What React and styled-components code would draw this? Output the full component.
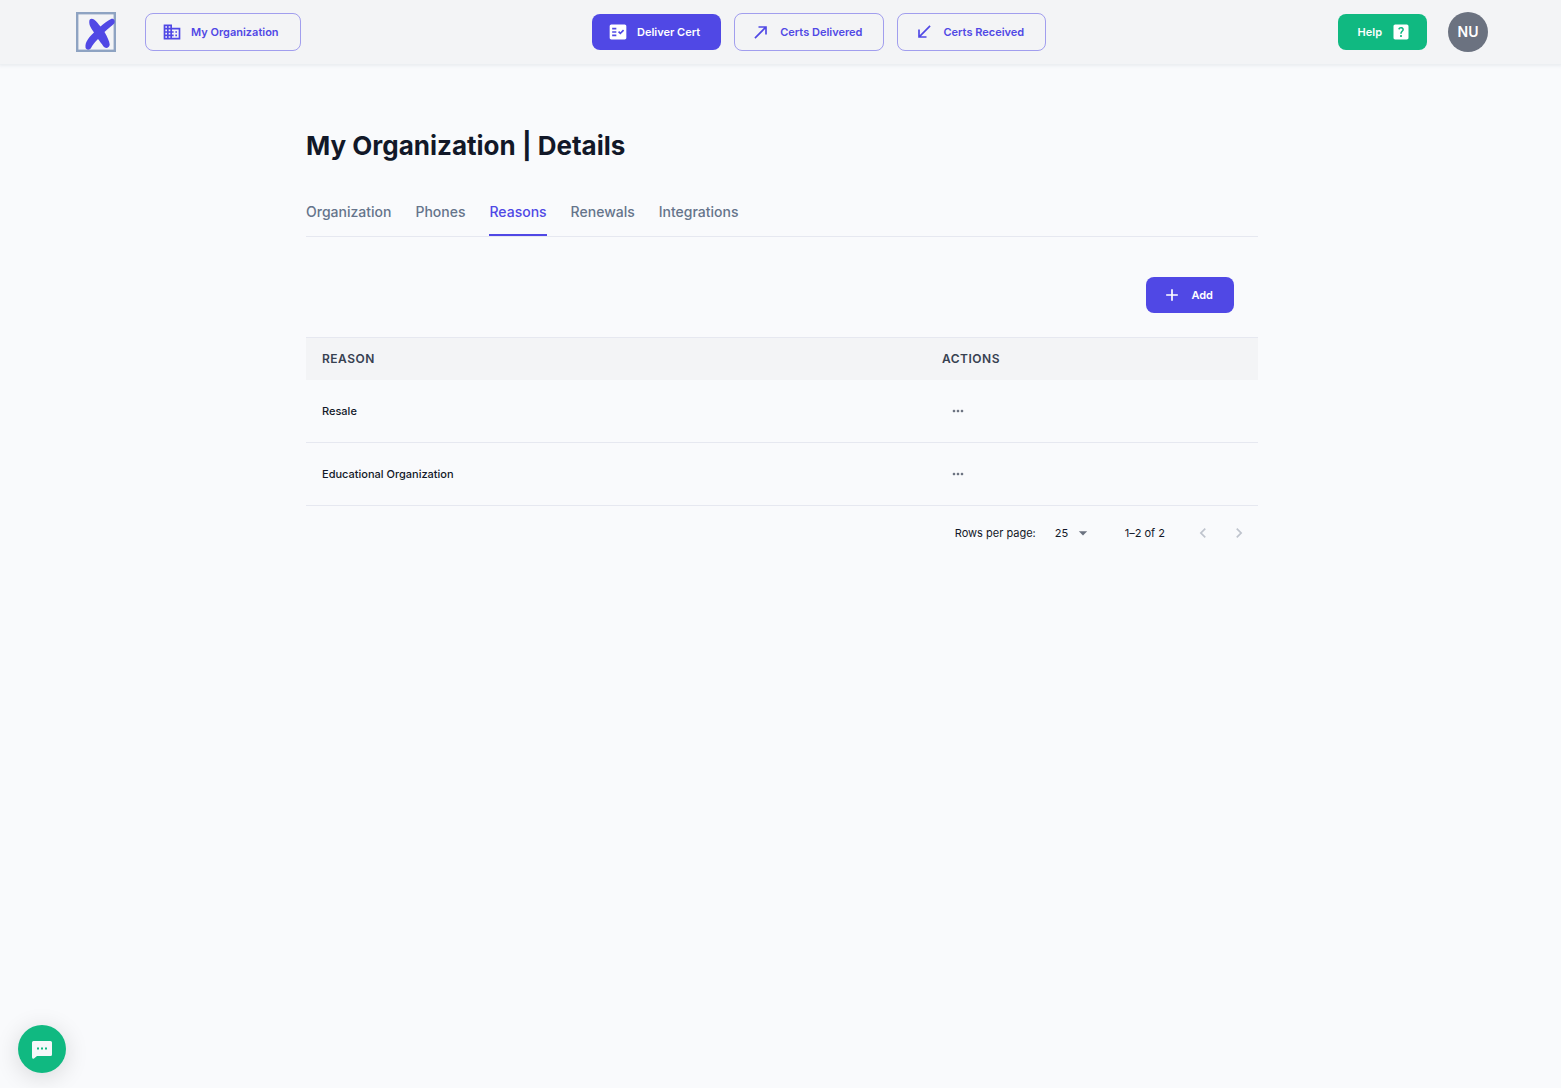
import React from "react";
import styled, { createGlobalStyle, css } from "styled-components";
import {
  MdOutlineBusiness,
  MdFactCheck,
  MdCallMade,
  MdCallReceived,
  MdHelpCenter,
  MdAdd,
  MdMoreHoriz,
  MdArrowDropDown,
  MdKeyboardArrowLeft,
  MdKeyboardArrowRight,
} from "react-icons/md";

const color = {
  primary: "#5048e5",
  success: "#10b981",
  page: "#f9fafc",
  surface: "#f3f4f6",
  divider: "#e6e8f0",
  text: "#121828",
  muted: "#65748b",
  heading: "#374151",
  grey: "#6b7280",
};

const GlobalStyle = createGlobalStyle`
  *, *::before, *::after { box-sizing: border-box; }
  body {
    margin: 0;
    background: ${color.page};
    color: ${color.text};
    font-family: Inter, "Liberation Sans", sans-serif;
    font-size: 11px;
    line-height: 20px;
  }
  button, select { font: inherit; cursor: pointer; }
`;

const Header = styled.header`
  display: flex;
  align-items: center;
  justify-content: space-between;
  height: 64px;
  padding: 0 73px 0 76px;
  background: ${color.surface};
  box-shadow: 0 1px 3px 1px rgba(100, 116, 139, 0.1);
`;

const Group = styled.div`
  display: flex;
  align-items: center;
  gap: ${(p) => p.$gap}px;
`;

const LogoLink = styled.a`
  display: block;
  width: 40px;
  height: 40px;
`;

const variants = {
  filled: css`
    border: 0;
    color: #fff;
    background: ${color.primary};
  `,
  success: css`
    border: 0;
    color: #fff;
    background: ${color.success};
  `,
  outlined: css`
    border: 1px solid rgba(80, 72, 229, 0.5);
    color: ${color.primary};
    background: transparent;
  `,
};

const Button = styled.button`
  display: inline-flex;
  align-items: center;
  gap: 9px;
  padding: ${(p) => (p.$iconEnd ? "8px 16px 8px 20px" : "8px 21px 8px 16px")};
  border-radius: 8px;
  font-weight: 600;
  line-height: 20px;
  ${(p) => variants[p.$variant]}

  svg {
    width: 20px;
    height: 20px;
  }
`;

const Avatar = styled.button`
  width: 40px;
  height: 40px;
  padding: 0;
  border: 0;
  border-radius: 50%;
  background: ${color.grey};
  color: #fff;
  font-size: 14px;
  font-weight: 600;
`;

const Main = styled.main`
  max-width: 997px;
  margin: 0 auto;
  padding: 64px 21px 64px 24px;
`;

const Title = styled.h1`
  margin: 0;
  font-size: 26px;
  font-weight: 700;
  line-height: 36px;
`;

const Tabs = styled.nav`
  display: flex;
  gap: 24px;
  margin-top: 24px;
  border-bottom: 1px solid ${color.divider};
`;

const Tab = styled.a`
  padding: 12px 0 10px;
  border-bottom: 2px solid ${(p) => (p.$active ? color.primary : "transparent")};
  color: ${(p) => (p.$active ? color.primary : color.muted)};
  font-size: 14px;
  font-weight: 500;
  line-height: 24px;
  text-decoration: none;
`;

const Toolbar = styled.div`
  display: flex;
  justify-content: flex-end;
  padding: 40px 24px 24px;
`;

const Table = styled.table`
  width: 100%;
  border-collapse: separate;
  border-spacing: 0;
  table-layout: fixed;
`;

const HeadCell = styled.th`
  width: ${(p) => p.$width};
  height: 43px;
  padding: 0 16px;
  border-top: 1px solid ${color.divider};
  background: ${color.surface};
  color: ${color.heading};
  font-size: 12px;
  font-weight: 600;
  letter-spacing: 0.5px;
  text-align: left;
  text-transform: uppercase;
`;

const Cell = styled.td`
  height: 63px;
  padding: 0 16px;
  border-bottom: 1px solid ${color.divider};
  font-weight: 500;
`;

const IconButton = styled.button`
  display: flex;
  align-items: center;
  justify-content: center;
  padding: 8px;
  border: 0;
  border-radius: 50%;
  background: transparent;
  color: ${color.grey};

  &:disabled { color: #bfc4cd; }
  svg {
    width: ${(p) => p.$size}px;
    height: ${(p) => p.$size}px;
  }
`;

const Pagination = styled.div`
  display: flex;
  align-items: center;
  justify-content: flex-end;
  height: 53px;
  padding-right: 1px;
`;

const SelectWrap = styled.div`
  display: flex;
  align-items: center;
  margin: 0 32px 0 19px;

  svg {
    width: 20px;
    height: 20px;
    margin-left: -20px;
    color: ${color.grey};
    pointer-events: none;
  }
`;

const Select = styled.select`
  width: 38px;
  padding: 0;
  border: 0;
  appearance: none;
  background: transparent;
  color: ${color.text};
`;

const Pager = styled.div`
  display: flex;
  margin-left: 20px;
`;

const ChatButton = styled.button`
  position: fixed;
  left: 18px;
  bottom: 15px;
  display: flex;
  align-items: center;
  justify-content: center;
  width: 48px;
  height: 48px;
  padding: 0;
  border: 0;
  border-radius: 50%;
  background: ${color.success};
  box-shadow: 0 4px 24px rgba(0, 0, 0, 0.14);
`;

function Logo() {
  return (
    <svg width="40" height="40" viewBox="0 0 40 40" fill="none" aria-hidden="true">
      <rect x="1.200" y="1.200" width="37.600" height="37.600" stroke="#8ea3c2" strokeWidth="2.400" />
      <g fill={color.primary}>
        <path d="M13.300 9C13.500 6.500 16 6 18 7.500C20.500 9.500 22.500 12 24.500 14.500C28 11.500 31.500 8.500 35 7C37.500 6.200 39.500 8.500 38.500 11C37.500 13 33 15.500 28.500 20C31 24.500 33.500 29 33.700 32.500C33.500 36 29.500 37 27.500 34.500C25.500 31.500 23.500 29 22 27C19 30 16.500 33 15 36C13.500 38.500 10 38 9.500 35.500C9 29.500 13 25.500 18 20.500C16 17 12.800 14 13.300 9Z" />
      </g>
    </svg>
  );
}

function ChatIcon() {
  return (
    <svg width="22" height="22" viewBox="0 0 22 22" aria-hidden="true">
      <path
        d="M2.500 3H19.500Q21 3 21 4.500V16.500Q21 18 19.500 18H6L3 20.500Q1 21.500 1 19V4.500Q1 3 2.500 3Z"
        fill="#f6f7f9"
      />
      <path d="M6 9.500h2v2H6zM10 9.500h2v2h-2zM14 9.500h2v2h-2z" fill={color.success} />
    </svg>
  );
}

const tabs = ["Organization", "Phones", "Reasons", "Renewals", "Integrations"];
const reasons = ["Resale", "Educational Organization"];

export default function App() {
  return (
    <>
      <GlobalStyle />
      <Header>
        <Group $gap={29}>
          <LogoLink href="#home" aria-label="Home">
            <Logo />
          </LogoLink>
          <Button $variant="outlined">
            <MdOutlineBusiness />
            My Organization
          </Button>
        </Group>
        <Group $gap={13}>
          <Button $variant="filled">
            <MdFactCheck />
            Deliver Cert
          </Button>
          <Button $variant="outlined">
            <MdCallMade />
            Certs Delivered
          </Button>
          <Button $variant="outlined">
            <MdCallReceived />
            Certs Received
          </Button>
        </Group>
        <Group $gap={21}>
          <Button $variant="success" $iconEnd>
            Help
            <MdHelpCenter />
          </Button>
          <Avatar aria-label="Account">NU</Avatar>
        </Group>
      </Header>

      <Main>
        <Title>My Organization | Details</Title>
        <Tabs aria-label="Organization sections">
          {tabs.map((name) => (
            <Tab
              key={name}
              href={`#${name.toLowerCase()}`}
              $active={name === "Reasons"}
              aria-current={name === "Reasons" ? "page" : undefined}
            >
              {name}
            </Tab>
          ))}
        </Tabs>

        <Toolbar>
          <Button $variant="filled">
            <MdAdd />
            Add
          </Button>
        </Toolbar>

        <Table>
          <thead>
            <tr>
              <HeadCell $width="auto">Reason</HeadCell>
              <HeadCell $width="332px">Actions</HeadCell>
            </tr>
          </thead>
          <tbody>
            {reasons.map((reason) => (
              <tr key={reason}>
                <Cell>{reason}</Cell>
                <Cell>
                  <IconButton $size={16} aria-label={`Actions for ${reason}`}>
                    <MdMoreHoriz />
                  </IconButton>
                </Cell>
              </tr>
            ))}
          </tbody>
        </Table>

        <Pagination>
          <label htmlFor="rows">Rows per page:</label>
          <SelectWrap>
            <Select id="rows" defaultValue="25">
              <option>10</option>
              <option>25</option>
              <option>50</option>
            </Select>
            <MdArrowDropDown />
          </SelectWrap>
          <span>1–2 of 2</span>
          <Pager>
            <IconButton $size={20} disabled aria-label="Previous page">
              <MdKeyboardArrowLeft />
            </IconButton>
            <IconButton $size={20} disabled aria-label="Next page">
              <MdKeyboardArrowRight />
            </IconButton>
          </Pager>
        </Pagination>
      </Main>

      <ChatButton aria-label="Open chat">
        <ChatIcon />
      </ChatButton>
    </>
  );
}
